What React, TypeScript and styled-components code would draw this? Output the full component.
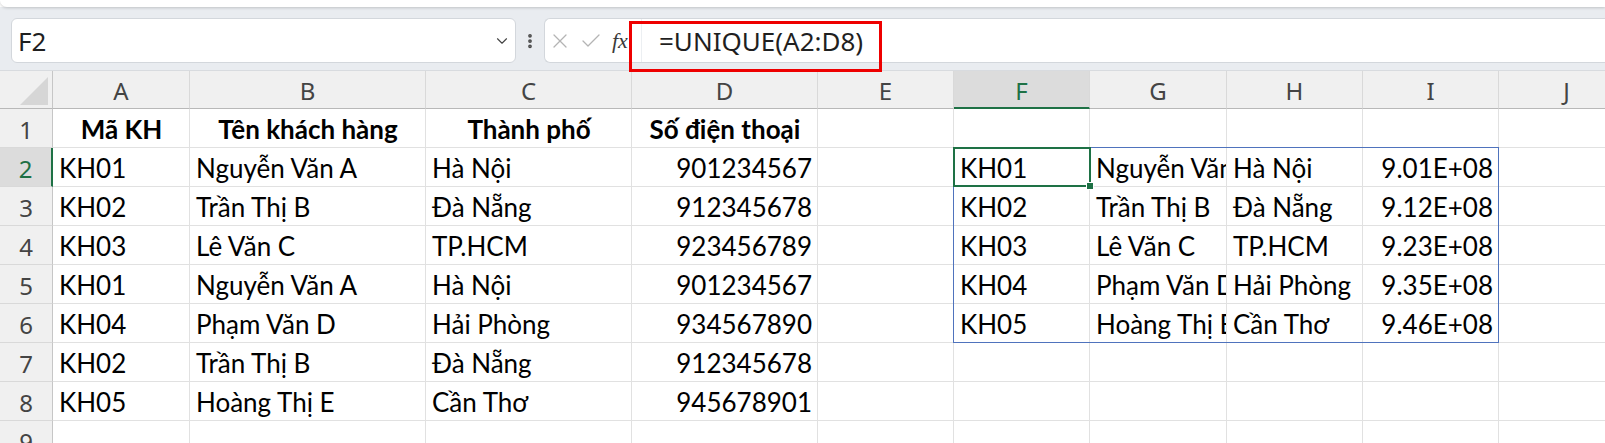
import React from "react";
import styled, { createGlobalStyle } from "styled-components";
import { X, Check, ChevronDown, EllipsisVertical } from "lucide-react";

const GlobalStyle = createGlobalStyle`
  html, body {
    margin: 0;
    padding: 0;
    background: #ffffff;
    overflow: hidden;
  }
  * { box-sizing: border-box; }
`;

// row header + columns A..J
const COLS = [53, 137, 236, 206, 186, 136, 136, 137, 136, 136, 136];
const LETTERS = ["A", "B", "C", "D", "E", "F", "G", "H", "I", "J"];
const GREEN = "#1e7145";

type Align = "left" | "right" | "center";
type CellData = { text?: string; align?: Align; bold?: boolean };

const L = (text: string): CellData => ({ text });
const R = (text: string): CellData => ({ text, align: "right" });
const H = (text: string): CellData => ({ text, align: "center", bold: true });
const E: CellData = {};

const unique = [
  ["KH01", "Nguyễn Văn A", "Hà Nội", "9.01E+08"],
  ["KH02", "Trần Thị B", "Đà Nẵng", "9.12E+08"],
  ["KH03", "Lê Văn C", "TP.HCM", "9.23E+08"],
  ["KH04", "Phạm Văn D", "Hải Phòng", "9.35E+08"],
  ["KH05", "Hoàng Thị E", "Cần Thơ", "9.46E+08"],
];

const source = [
  ["KH01", "Nguyễn Văn A", "Hà Nội", "901234567"],
  ["KH02", "Trần Thị B", "Đà Nẵng", "912345678"],
  ["KH03", "Lê Văn C", "TP.HCM", "923456789"],
  ["KH01", "Nguyễn Văn A", "Hà Nội", "901234567"],
  ["KH04", "Phạm Văn D", "Hải Phòng", "934567890"],
  ["KH02", "Trần Thị B", "Đà Nẵng", "912345678"],
  ["KH05", "Hoàng Thị E", "Cần Thơ", "945678901"],
];

const rows: CellData[][] = [
  [H("Mã KH"), H("Tên khách hàng"), H("Thành phố"), H("Số điện thoại"), E, E, E, E, E, E],
  ...source.map((s, i) => {
    const u = unique[i];
    return [
      L(s[0]), L(s[1]), L(s[2]), R(s[3]), E,
      u ? L(u[0]) : E, u ? L(u[1]) : E, u ? L(u[2]) : E, u ? R(u[3]) : E, E,
    ];
  }),
  [E, E, E, E, E, E, E, E, E, E],
];

const Page = styled.div`
  width: 1605px;
  height: 443px;
  overflow: hidden;
  display: flex;
  flex-direction: column;
  background: #ffffff;
`;

const RibbonEdge = styled.div`
  height: 7px;
  flex: none;
  background: #ffffff;
  border-bottom-left-radius: 8px;
  box-shadow: 0 1px 3px rgba(0, 0, 0, 0.18);
  position: relative;
  z-index: 2;
`;

const FormulaRow = styled.div`
  height: 63px;
  flex: none;
  display: flex;
  align-items: flex-start;
  padding: 11px 0 0 11px;
  background: #e9ecf0;
`;

const NameBox = styled.div`
  width: 505px;
  height: 45px;
  display: flex;
  align-items: center;
  justify-content: space-between;
  padding: 0 4px 0 6px;
  background: #ffffff;
  border: 1px solid #d3d7dc;
  border-radius: 6px;
  font-family: "Noto Sans", "Open Sans", sans-serif;
  font-size: 26px;
  color: #1f1f1f;
`;

const Dots = styled.div`
  width: 28px;
  height: 45px;
  display: flex;
  align-items: center;
  justify-content: center;
  color: #4a4a4a;
`;

const FormulaBox = styled.div`
  flex: 1;
  height: 45px;
  display: flex;
  align-items: center;
  position: relative;
  background: #ffffff;
  border: 1px solid #d3d7dc;
  border-right: none;
  border-radius: 6px 0 0 6px;
`;

const ActionIcons = styled.div`
  width: 96px;
  height: 100%;
  display: flex;
  align-items: center;
  gap: 7px;
  padding-left: 3px;
  color: #b4b4b4;
`;

const Fx = styled.span`
  font-family: "Liberation Serif", "DejaVu Serif", serif;
  font-style: italic;
  font-size: 22px;
  color: #3a3a3a;
  margin-left: 2px;
`;

const FormulaInput = styled.div`
  flex: 1;
  height: 100%;
  display: flex;
  align-items: center;
  padding-left: 17px;
  font-family: "Noto Sans", "Open Sans", sans-serif;
  font-size: 26px;
  color: #1f1f1f;
  border-left: 1px solid #eceff2;
`;

const Highlight = styled.div`
  position: absolute;
  left: 84px;
  top: 2px;
  width: 253px;
  height: 51px;
  border: 3px solid #ee0000;
  pointer-events: none;
  z-index: 3;
`;

const Sheet = styled.div`
  position: relative;
  display: grid;
  grid-template-columns: ${COLS.map((w) => `${w}px`).join(" ")};
  grid-template-rows: 38px repeat(9, 39px);
  border-top: 1px solid #d8dbdf;
`;

const Corner = styled.div`
  background: #f0f0f0;
  border-right: 1px solid #c6c6c6;
  border-bottom: 1px solid #b8b8b8;
  display: flex;
  align-items: flex-end;
  justify-content: flex-end;
  padding: 0 4px 3px 0;
`;

const ColHead = styled.div<{ $active?: boolean }>`
  background: ${(p) => (p.$active ? "#dcdcdc" : "#f0f0f0")};
  border-right: 1px solid #d9d9d9;
  border-bottom: ${(p) => (p.$active ? `2px solid ${GREEN}` : "1px solid #b8b8b8")};
  color: ${(p) => (p.$active ? GREEN : "#444444")};
  font-family: "Noto Sans", "Open Sans", sans-serif;
  font-size: 24px;
  display: flex;
  align-items: center;
  justify-content: center;
  padding-top: 2px;
`;

const RowHead = styled.div<{ $active?: boolean }>`
  background: ${(p) => (p.$active ? "#dcdcdc" : "#f0f0f0")};
  border-right: ${(p) => (p.$active ? `2px solid ${GREEN}` : "1px solid #c6c6c6")};
  border-bottom: 1px solid #d9d9d9;
  color: ${(p) => (p.$active ? GREEN : "#444444")};
  font-family: "Noto Sans", "Open Sans", sans-serif;
  font-size: 24px;
  display: flex;
  align-items: center;
  justify-content: center;
  padding-top: 2px;
`;

const Cell = styled.div<{ $align?: Align; $bold?: boolean }>`
  border-right: 1px solid #e1e1e1;
  border-bottom: 1px solid #e1e1e1;
  padding: 0 5px 0 6px;
  font-family: Lato, "Liberation Sans", sans-serif;
  font-size: 26px;
  line-height: 40px;
  font-weight: ${(p) => (p.$bold ? 700 : 400)};
  text-align: ${(p) => p.$align || "left"};
  white-space: nowrap;
  overflow: hidden;
  color: #000000;
`;

const SpillRange = styled.div`
  position: absolute;
  grid-column: 7 / 11;
  grid-row: 3 / 8;
  inset: -1px 0 0 -1px;
  border: 1px solid #4f73bd;
  pointer-events: none;
`;

const ActiveCell = styled.div`
  position: absolute;
  grid-column: 7 / 8;
  grid-row: 3 / 4;
  inset: -1px -1px 0 -1px;
  border: 2px solid ${GREEN};
  pointer-events: none;
  z-index: 2;
`;

const FillHandle = styled.div`
  position: absolute;
  right: -5px;
  bottom: -5px;
  width: 8px;
  height: 8px;
  background: ${GREEN};
  border: 1px solid #ffffff;
`;

export default function App() {
  return (
    <>
      <GlobalStyle />
      <Page>
        <RibbonEdge />
        <FormulaRow>
          <NameBox>
            <span>F2</span>
            <ChevronDown size={18} strokeWidth={1.5} color="#444" />
          </NameBox>
          <Dots>
            <EllipsisVertical size={18} strokeWidth={3} />
          </Dots>
          <FormulaBox>
            <ActionIcons>
              <X size={24} strokeWidth={1.3} />
              <Check size={24} strokeWidth={1.3} />
              <Fx>fx</Fx>
            </ActionIcons>
            <FormulaInput>=UNIQUE(A2:D8)</FormulaInput>
            <Highlight />
          </FormulaBox>
        </FormulaRow>
        <Sheet>
          <Corner>
            <svg width="28" height="28" viewBox="0 0 28 28">
              <polygon points="28,0 28,28 0,28" fill="#d6d6d6" />
            </svg>
          </Corner>
          {LETTERS.map((l) => (
            <ColHead key={l} $active={l === "F"}>
              {l}
            </ColHead>
          ))}
          {rows.map((row, r) => (
            <React.Fragment key={r}>
              <RowHead $active={r === 1}>{r + 1}</RowHead>
              {row.map((c, ci) => (
                <Cell key={ci} $align={c.align} $bold={c.bold}>
                  {c.text}
                </Cell>
              ))}
            </React.Fragment>
          ))}
          <SpillRange />
          <ActiveCell>
            <FillHandle />
          </ActiveCell>
        </Sheet>
      </Page>
    </>
  );
}
